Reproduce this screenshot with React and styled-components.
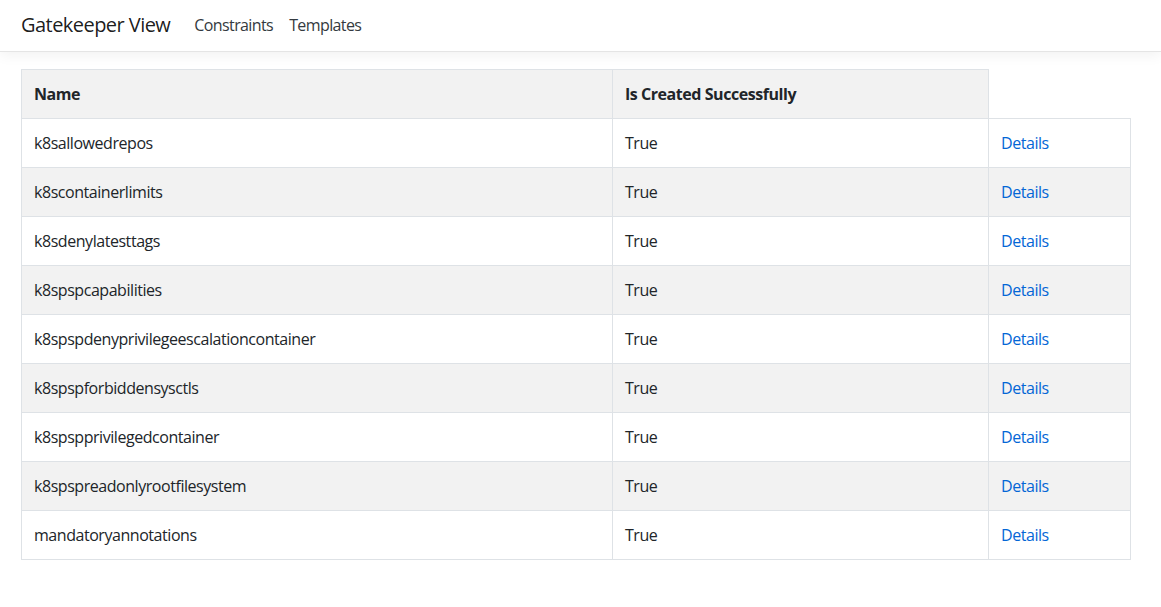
import React from 'react'
import styled, { createGlobalStyle } from 'styled-components'

const GlobalStyle = createGlobalStyle`
  html, body {
    margin: 0;
    padding: 0;
    background: #fff;
  }
  body {
    font-family: "Segoe UI", "Open Sans", "Liberation Sans", sans-serif;
    font-size: 16px;
    line-height: 1.5;
    color: #212529;
    letter-spacing: -0.45px;
  }
`

const Navbar = styled.nav`
  display: flex;
  align-items: center;
  height: 51px;
  padding: 0 21px;
  border-bottom: 1px solid #e5e5e5;
  box-shadow: 0 4px 12px rgba(0, 0, 0, 0.05);
`

const Brand = styled.a`
  font-size: 20px;
  letter-spacing: -0.55px;
  color: rgba(0, 0, 0, 0.9);
  text-decoration: none;
  margin-right: 16px;
  margin-top: -2px;
`

const NavLink = styled.a`
  font-size: 16px;
  letter-spacing: -0.6px;
  color: #343a40;
  text-decoration: none;
  padding: 0 8px;
  margin-top: -2px;
`

const Main = styled.main`
  padding: 17px 30px 0 21px;
`

const Table = styled.table`
  width: 100%;
  border-collapse: collapse;
`

const Row = styled.tr`
  background: ${props => props.$striped ? '#f2f2f2' : '#fff'};
`

const HeadCell = styled.th`
  text-align: left;
  font-weight: 700;
  padding: 12px;
  border: 1px solid #dee2e6;
  width: ${props => props.$width || 'auto'};
`

const Cell = styled.td`
  padding: 12px;
  border: 1px solid #dee2e6;
`

const DetailsLink = styled.a`
  color: #0366d6;
  text-decoration: none;
`

const templates = [
  'k8sallowedrepos',
  'k8scontainerlimits',
  'k8sdenylatesttags',
  'k8spspcapabilities',
  'k8spspdenyprivilegeescalationcontainer',
  'k8spspforbiddensysctls',
  'k8spspprivilegedcontainer',
  'k8spspreadonlyrootfilesystem',
  'mandatoryannotations',
]

const App = () => {
  return (
    <>
      <GlobalStyle />
      <Navbar>
        <Brand href="#">Gatekeeper View</Brand>
        <NavLink href="#">Constraints</NavLink>
        <NavLink href="#">Templates</NavLink>
      </Navbar>
      <Main>
        <Table>
          <tbody>
            <Row $striped>
              <HeadCell $width="566px">Name</HeadCell>
              <HeadCell $width="351px">Is Created Successfully</HeadCell>
            </Row>
            {templates.map((name, i) => (
              <Row key={name} $striped={i % 2 === 1}>
                <Cell>{name}</Cell>
                <Cell>True</Cell>
                <Cell><DetailsLink href="#">Details</DetailsLink></Cell>
              </Row>
            ))}
          </tbody>
        </Table>
      </Main>
    </>
  )
}

export default App
